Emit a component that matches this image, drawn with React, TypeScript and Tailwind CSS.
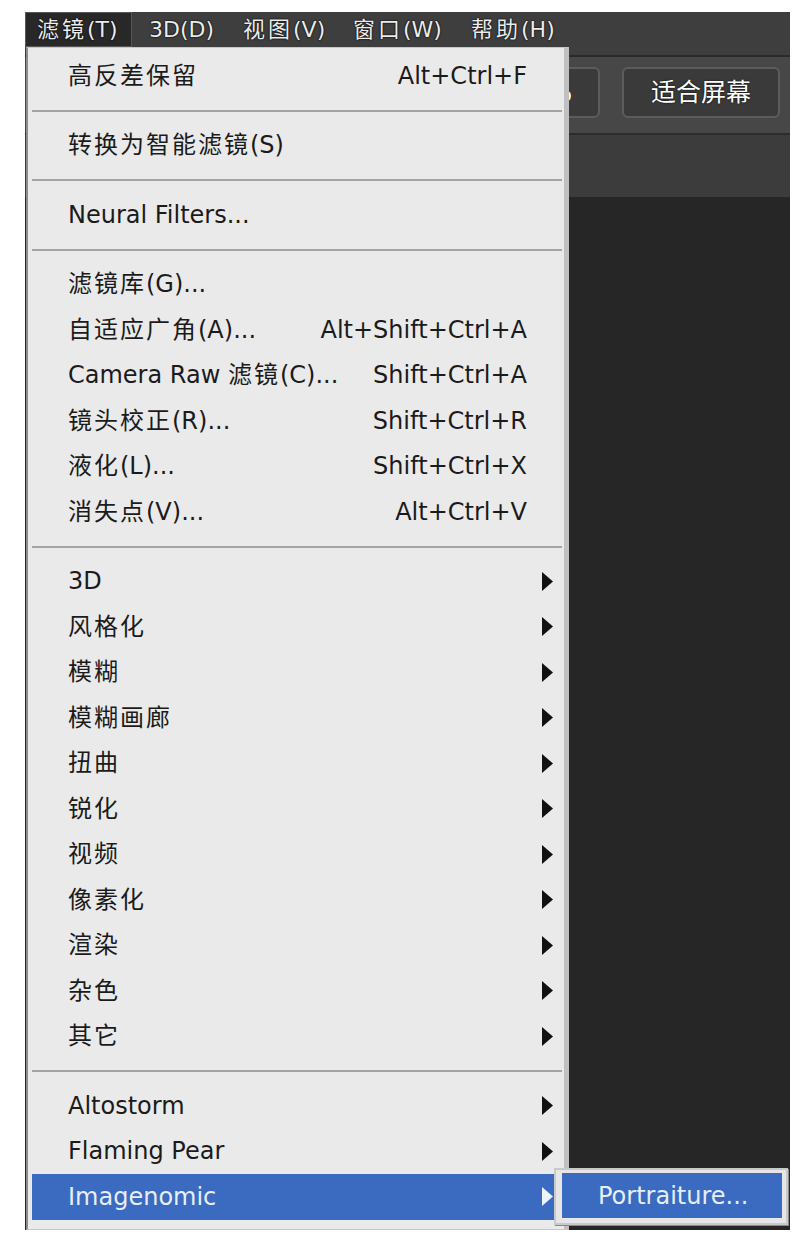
import React from "react";

type MenuEntry =
  | { kind: "item"; label: string; shortcut?: string; submenu?: boolean; active?: boolean }
  | { kind: "sep" };

const CJK = /([\u3400-\u9fff]+)/;

// Chinese runs are a touch wider than the Latin ones in the original UI
const Label: React.FC<{ text: string; spacing?: string }> = ({ text, spacing = "tracking-[2px]" }) => (
  <>
    {text.split(CJK).map((part, i) =>
      CJK.test(part) ? (
        <span key={i} className={spacing}>
          {part}
        </span>
      ) : (
        <React.Fragment key={i}>{part}</React.Fragment>
      )
    )}
  </>
);

const menuBar = [
  { label: "滤镜(T)", width: "w-[107px]", pad: "pl-[11px]", open: true },
  { label: "3D(D)", width: "w-[98px]", pad: "pl-[17px]" },
  { label: "视图(V)", width: "w-[110px]", pad: "pl-[13px]" },
  { label: "窗口(W)", width: "w-[118px]", pad: "pl-[13px]" },
  { label: "帮助(H)", width: "w-[120px]", pad: "pl-[13px]" },
];

const entries: MenuEntry[] = [
  { kind: "item", label: "高反差保留", shortcut: "Alt+Ctrl+F" },
  { kind: "sep" },
  { kind: "item", label: "转换为智能滤镜(S)" },
  { kind: "sep" },
  { kind: "item", label: "Neural Filters..." },
  { kind: "sep" },
  { kind: "item", label: "滤镜库(G)..." },
  { kind: "item", label: "自适应广角(A)...", shortcut: "Alt+Shift+Ctrl+A" },
  { kind: "item", label: "Camera Raw 滤镜(C)...", shortcut: "Shift+Ctrl+A" },
  { kind: "item", label: "镜头校正(R)...", shortcut: "Shift+Ctrl+R" },
  { kind: "item", label: "液化(L)...", shortcut: "Shift+Ctrl+X" },
  { kind: "item", label: "消失点(V)...", shortcut: "Alt+Ctrl+V" },
  { kind: "sep" },
  { kind: "item", label: "3D", submenu: true },
  { kind: "item", label: "风格化", submenu: true },
  { kind: "item", label: "模糊", submenu: true },
  { kind: "item", label: "模糊画廊", submenu: true },
  { kind: "item", label: "扭曲", submenu: true },
  { kind: "item", label: "锐化", submenu: true },
  { kind: "item", label: "视频", submenu: true },
  { kind: "item", label: "像素化", submenu: true },
  { kind: "item", label: "渲染", submenu: true },
  { kind: "item", label: "杂色", submenu: true },
  { kind: "item", label: "其它", submenu: true },
  { kind: "sep" },
  { kind: "item", label: "Altostorm", submenu: true },
  { kind: "item", label: "Flaming Pear", submenu: true },
  { kind: "item", label: "Imagenomic", submenu: true, active: true },
];

const Arrow: React.FC<{ light?: boolean }> = ({ light }) => (
  <svg width="11" height="19" viewBox="0 0 11 19" className="shrink-0">
    <polygon points="0,0 11,9.5 0,19" fill={light ? "#eef2fb" : "#111111"} />
  </svg>
);

export default function App() {
  return (
    <div className="min-h-[1245px] bg-white pt-[12px] pl-[25px] font-['DejaVu_Sans','Noto_Sans_CJK_SC',sans-serif]">
      <div className="relative flex h-[1218px] w-[765px] flex-col bg-[#262626]">
        {/* menu bar */}
        <div className="flex h-[43px] items-start bg-[#3e3e3e] text-[22px] text-[#ececec] [text-shadow:0_0_2px_#000,0_0_1px_#000]">
          {menuBar.map((m) => (
            <div
              key={m.label}
              className={`flex h-[35px] shrink-0 items-center ${m.width} ${m.pad} ${
                m.open ? "border border-[#575757] bg-[#282828]" : ""
              }`}
            >
              <Label text={m.label} spacing="tracking-[3px]" />
            </div>
          ))}
        </div>
        <div className="h-[2px] bg-[#2a2a2a]" />

        {/* options bar */}
        <div className="flex h-[76px] items-start justify-end gap-[22px] bg-[#474747] pt-[10px] pr-[10px]">
          <div className="flex h-[51px] w-[120px] items-center justify-end rounded-[6px] border-2 border-[#5c5c5c] bg-[#3a3a3a] pr-[26px] text-[24px] text-white">
            100%
          </div>
          <div className="flex h-[51px] w-[158px] items-center justify-center rounded-[6px] border-2 border-[#5c5c5c] bg-[#3a3a3a] text-[25px] text-white [text-shadow:0_0_2px_#000]">
            适合屏幕
          </div>
        </div>
        <div className="h-[2px] bg-[#2c2c2c]" />
        <div className="h-[62px] bg-[#3c3c3c]" />
        <div className="flex-1 bg-[#262626]" />

        {/* filter dropdown */}
        <div className="absolute top-[35px] left-[1px] w-[543px] border-t border-b border-l-2 border-r-[5px] border-t-[#c8c8c8] border-b-[#c8c8c8] border-l-[#8c8c8c] border-r-[#c0c0c0] bg-[#eaeaea] pt-[5px] pb-[9px] text-[24px] text-[#1b1b1b]">
          {entries.map((e, i) =>
            e.kind === "sep" ? (
              <div key={i} className="flex h-[24px] items-center pl-[4px] pr-[2px]">
                <div className="h-[2px] w-full bg-[#a4a4a4]" />
              </div>
            ) : (
              <div
                key={i}
                className={`ml-[4px] mr-[2px] flex h-[45.5px] items-center pl-[36px] ${
                  e.active ? "bg-[#3a6bc0] text-[#e8edf8]" : ""
                } ${e.submenu ? "pr-[9px]" : "pr-[35px]"}`}
              >
                <span className="flex-1 whitespace-nowrap">
                  <Label text={e.label} />
                </span>
                {e.shortcut && <span className="whitespace-nowrap">{e.shortcut}</span>}
                {e.submenu && <Arrow light={e.active} />}
              </div>
            )
          )}
        </div>

        {/* Imagenomic submenu */}
        <div className="absolute top-[1156px] left-[529px] w-[234px] border-2 border-[#c9c9c9] bg-[#e6e6e6] pt-[3px] pr-[4px] pb-[5px] pl-[6px] shadow-[1px_1px_0_#8a8a8a]">
          <div className="flex h-[45px] items-center bg-[#3a6bc0] pl-[36px] text-[24px] text-[#e8edf8]">
            Portraiture...
          </div>
        </div>
      </div>
    </div>
  );
}
